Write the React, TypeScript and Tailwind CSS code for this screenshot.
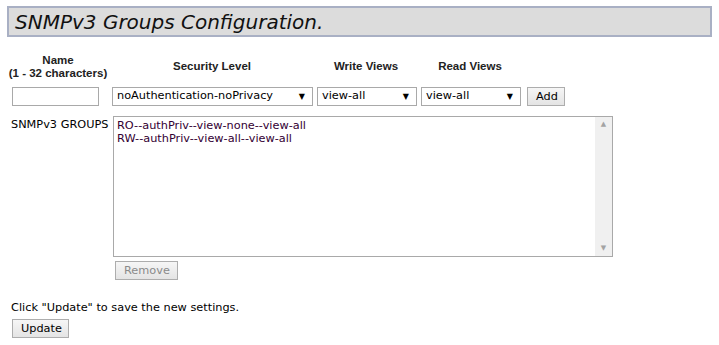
import React from 'react';

const verdana = "font-['DejaVu_Sans','Liberation_Sans',sans-serif]";
const arial = "font-['Liberation_Sans',Arial,sans-serif]";

const FakeSelect = ({ value, width }: { value: string; width: string }) => (
  <div
    className={`${width} h-[19px] border border-[#a9a9a9] bg-white flex items-center justify-between pl-[4px] pr-[7px] text-[11.3px] text-black`}
  >
    <span>{value}</span>
    <span className="text-[8px] leading-none">▼</span>
  </div>
);

const Btn = ({ children, disabled, className = '' }: { children: React.ReactNode; disabled?: boolean; className?: string }) => (
  <button
    className={`h-[19px] px-[8px] border border-[#adadad] bg-gradient-to-b from-[#f6f6f6] to-[#e4e4e4] text-[11.3px] leading-none ${
      disabled ? 'text-[#8a8a8a]' : 'text-black'
    } ${className}`}
  >
    {children}
  </button>
);

const App = () => {
  const groups = ['RO--authPriv--view-none--view-all', 'RW--authPriv--view-all--view-all'];

  return (
    <div className={`w-[719px] h-[345px] bg-white ${verdana} text-[11.3px] text-black`}>
      {/* Title */}
      <div className="pt-[6px] px-[7px]">
        <div className="h-[31px] border-2 border-[#a9b0c4] bg-[#dcdcdc] flex items-center pl-[6px]">
          <span className="italic text-[20px] text-[#111]">SNMPv3 Groups Configuration.</span>
        </div>
      </div>

      {/* Column headers */}
      <div className={`flex items-center mt-[16px] h-[28px] ${arial} font-bold text-[11.5px] text-[#222]`}>
        <div className="w-[112px] pl-[4px] text-center leading-[13px]">
          Name
          <br />
          (1 - 32 characters)
        </div>
        <div className="w-[200px] text-center">Security Level</div>
        <div className="w-[108px] text-center">Write Views</div>
        <div className="w-[100px] text-center">Read Views</div>
      </div>

      {/* Inputs row */}
      <div className="flex items-center mt-[6px] pl-[12px]">
        <div className="w-[87px] h-[19px] border border-[#a9a9a9] bg-white" />
        <div className="ml-[13px]">
          <FakeSelect value="noAuthentication-noPrivacy" width="w-[201px]" />
        </div>
        <div className="ml-[4px]">
          <FakeSelect value="view-all" width="w-[100px]" />
        </div>
        <div className="ml-[4px]">
          <FakeSelect value="view-all" width="w-[100px]" />
        </div>
        <Btn className="ml-[6px] w-[38px] px-0">Add</Btn>
      </div>

      {/* Groups list */}
      <div className="flex mt-[10px]">
        <div className="w-[113px] pl-[11px] pt-[1px]">SNMPv3 GROUPS</div>
        <div>
          <div className="w-[500px] h-[141px] border border-[#a9a9a9] bg-white flex">
            <div className="flex-1 pl-[3px] pt-[2px] text-[#330033] leading-[13px]">
              {groups.map((g) => (
                <div key={g}>{g}</div>
              ))}
            </div>
            <div className="w-[17px] bg-[#f0f0f0] flex flex-col items-center justify-between py-[4px] text-[7px] text-[#a3a3a3] leading-none">
              <span>▲</span>
              <span>▼</span>
            </div>
          </div>
          <Btn disabled className="mt-[4px] ml-[2px] w-[63px] px-0">
            Remove
          </Btn>
        </div>
      </div>

      {/* Footer */}
      <div className="pl-[11px] mt-[20px]">Click "Update" to save the new settings.</div>
      <div className="pl-[12px] mt-[2px]">
        <Btn className="w-[57px] px-0">Update</Btn>
      </div>
    </div>
  );
};

export default App;
